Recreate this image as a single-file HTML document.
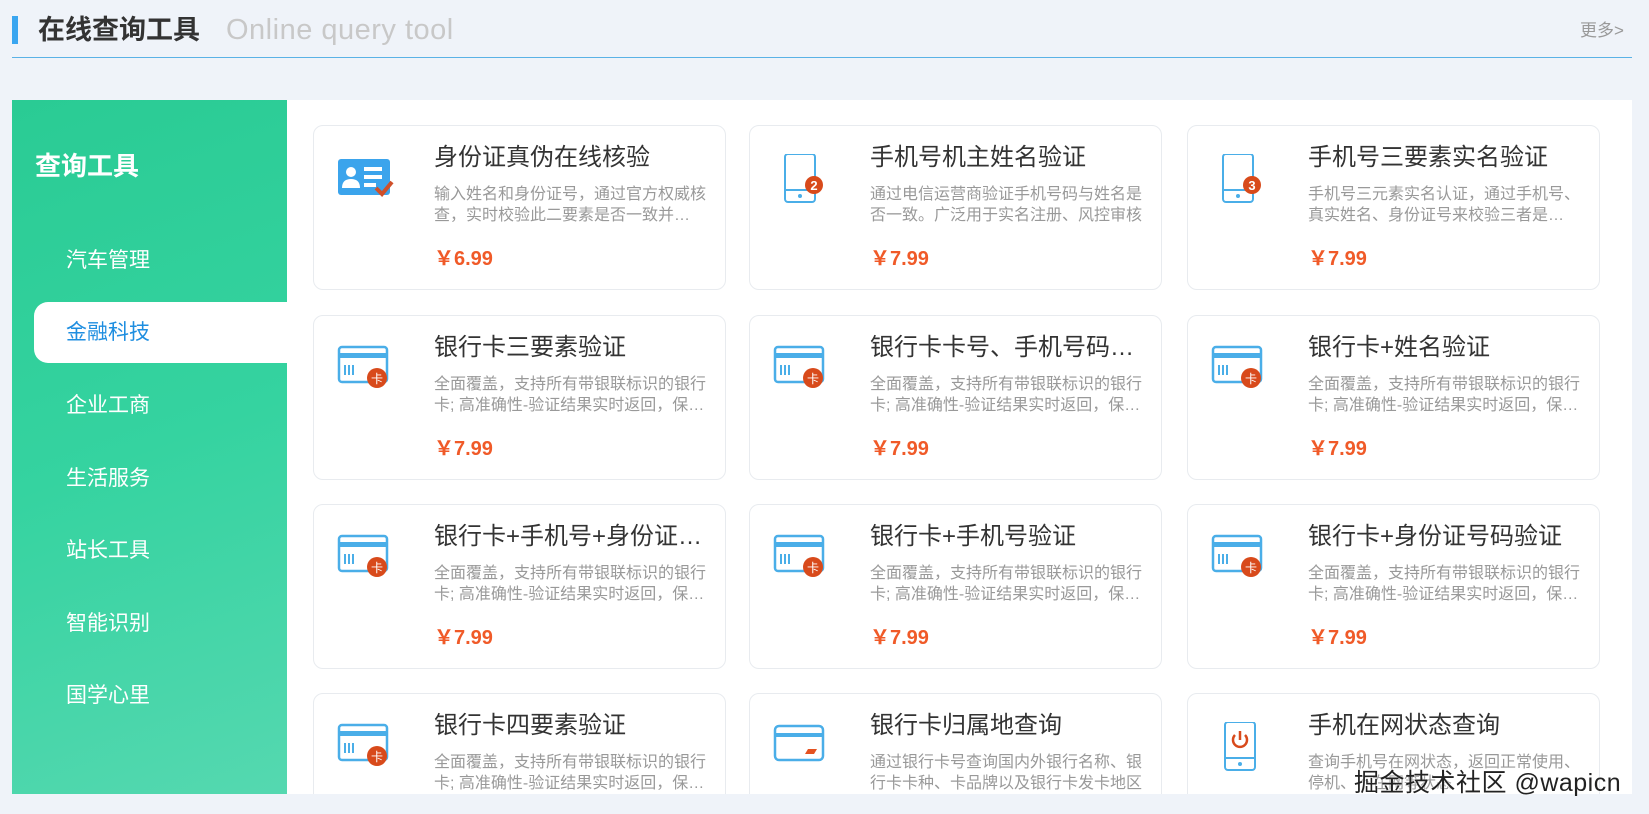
<!DOCTYPE html>
<html><head><meta charset="utf-8"><style>
*{margin:0;padding:0;box-sizing:border-box}
html{height:814px;overflow:hidden}
body{width:1649px;height:814px;overflow:hidden;background:#eff3f9;font-family:"Liberation Sans","Noto Sans CJK SC",sans-serif;position:relative}
.bar{position:absolute;left:12px;top:16px;width:6px;height:28px;background:#3aa6f0}
.t1{position:absolute;left:38px;top:12px;font-size:27px;font-weight:bold;color:#333;line-height:36px}
.t2{position:absolute;left:226px;top:12px;font-size:29px;color:#c8c8c8;line-height:36px;letter-spacing:0.5px}
.more{position:absolute;left:1580px;top:16px;font-size:17px;color:#999}
.line{position:absolute;left:12px;top:57px;width:1620px;height:1px;background:#5ab2e6}
.panel{position:absolute;left:12px;top:100px;width:1620px;height:694px;background:#fff;overflow:hidden}
.side{position:absolute;left:0;top:0;width:275px;height:694px;background:linear-gradient(160deg,#2acb94 0%,#35d3a0 50%,#55d8b0 100%)}
.side h2{position:absolute;left:23px;top:46px;font-size:26px;color:#fff;font-weight:bold}
.mi{position:absolute;left:54px;font-size:21px;color:#fff;line-height:30px}
.act{position:absolute;left:22px;top:202px;width:253px;height:61px;background:#fff;border-radius:14px 0 0 14px}
.card{position:absolute;width:413px;height:165px;border:1px solid #e8ebef;border-radius:10px;background:#fff}
.card svg{position:absolute;left:22px;top:28px}
.ct{position:absolute;left:120px;top:15px;font-size:24px;color:#333;white-space:nowrap;line-height:34px;width:272px;overflow:hidden;text-overflow:ellipsis}
.cd{position:absolute;left:120px;top:58px;width:272px;font-size:16px;color:#999;line-height:21px;height:42px;overflow:hidden;display:-webkit-box;-webkit-line-clamp:2;-webkit-box-orient:vertical}
.cp{position:absolute;left:120px;top:116px;font-size:20px;color:#f05a28;font-weight:bold}
.wm{position:absolute;left:1354px;top:763px;font-size:25px;color:#222;text-shadow:0 0 2px #fff;letter-spacing:0.5px}
</style></head><body>
<div class="bar"></div><div class="t1">在线查询工具</div><div class="t2">Online query tool</div><div class="more">更多&gt;</div><div class="line"></div>
<div class="panel">
<div class="side"><h2>查询工具</h2>
<div class="act"></div>
<div class="mi" style="top:146px">汽车管理</div>
<div class="mi" style="top:218px;color:#1e8ee0">金融科技</div>
<div class="mi" style="top:291px">企业工商</div>
<div class="mi" style="top:364px">生活服务</div>
<div class="mi" style="top:436px">站长工具</div>
<div class="mi" style="top:509px">智能识别</div>
<div class="mi" style="top:581px">国学心里</div>
</div>
<div id="cards"></div>
</div>
<script>
const id='<svg width="60" height="46"><rect x="2" y="5" width="52" height="36" rx="3" fill="#3ba4ec"/><circle cx="15" cy="18" r="5" fill="#fff"/><path d="M6 34q0-9 9-9q9 0 9 9z" fill="#fff"/><rect x="28" y="13" width="18" height="4" fill="#fff"/><rect x="28" y="21" width="18" height="4" fill="#fff"/><rect x="28" y="29" width="12" height="4" fill="#fff"/><path d="M40 34l6 6 10-12" stroke="#d0502a" stroke-width="4" fill="none"/></svg>';
const ph=n=>`<svg width="60" height="56"><rect x="13" y="0" width="30" height="48" rx="3" fill="none" stroke="#4aaee8" stroke-width="2"/><line x1="13" y1="36" x2="43" y2="36" stroke="#4aaee8" stroke-width="2"/><circle cx="28" cy="42" r="2" fill="#4aaee8"/><circle cx="42" cy="31" r="9" fill="#d84a1b"/><text x="42" y="36" font-size="13" font-weight="bold" fill="#fff" text-anchor="middle" font-family="Liberation Sans">${n}</text></svg>`;
const bk='<svg width="60" height="46"><rect x="3" y="3" width="48" height="35" rx="3" fill="none" stroke="#4aaee8" stroke-width="2.5"/><rect x="3" y="9" width="48" height="5" fill="#4aaee8"/><path d="M9 21v10M13 21v10M17 21v10" stroke="#4aaee8" stroke-width="2"/><circle cx="41" cy="34" r="10" fill="#d84a1b"/><text x="41" y="39" font-size="12" fill="#fff" text-anchor="middle">卡</text></svg>';
const bk2='<svg width="60" height="46"><rect x="3" y="4" width="48" height="34" rx="4" fill="none" stroke="#4aaee8" stroke-width="2.5"/><rect x="3" y="11" width="48" height="4" fill="#4aaee8"/><path d="M36 27h9l-3 5h-9z" fill="#e55220"/></svg>';
const pw='<svg width="60" height="56"><rect x="15" y="0" width="30" height="48" rx="3" fill="none" stroke="#4aaee8" stroke-width="2"/><line x1="15" y1="36" x2="45" y2="36" stroke="#4aaee8" stroke-width="2"/><circle cx="30" cy="42" r="2" fill="#4aaee8"/><path d="M25 13a7 7 0 1 0 10 0" stroke="#d84a1b" stroke-width="2.5" fill="none"/><line x1="30" y1="9" x2="30" y2="18" stroke="#d84a1b" stroke-width="2.5"/></svg>';
const bd='全面覆盖，支持所有带银联标识的银行卡; 高准确性-验证结果实时返回，保障数据安全可靠';
const D=[
[id,'身份证真伪在线核验','输入姓名和身份证号，通过官方权威核查，实时校验此二要素是否一致并返回结果','6.99'],
[ph(2),'手机号机主姓名验证','通过电信运营商验证手机号码与姓名是否一致。广泛用于实名注册、风控审核','7.99'],
[ph(3),'手机号三要素实名验证','手机号三元素实名认证，通过手机号、真实姓名、身份证号来校验三者是否一致','7.99'],
[bk,'银行卡三要素验证',bd,'7.99'],[bk,'银行卡卡号、手机号码验证',bd,'7.99'],[bk,'银行卡+姓名验证',bd,'7.99'],
[bk,'银行卡+手机号+身份证验证',bd,'7.99'],[bk,'银行卡+手机号验证',bd,'7.99'],[bk,'银行卡+身份证号码验证',bd,'7.99'],
[bk,'银行卡四要素验证',bd,'7.99'],[bk2,'银行卡归属地查询','通过银行卡号查询国内外银行名称、银行卡卡种、卡品牌以及银行卡发卡地区','7.99'],[pw,'手机在网状态查询','查询手机号在网状态，返回正常使用、停机、不在网等状态','7.99']];
const X=[301,737,1175],Y=[25,215,404,593];let h='';
D.forEach((d,i)=>{const x=X[i%3],y=Y[Math.floor(i/3)];h+=`<div class="card" style="left:${x}px;top:${y}px">${d[0]}<div class="ct">${d[1]}</div><div class="cd">${d[2]}</div><div class="cp">￥${d[3]}</div></div>`});
document.getElementById('cards').innerHTML=h;
</script>
<div class="wm">掘金技术社区 @wapicn</div>
</body></html>
